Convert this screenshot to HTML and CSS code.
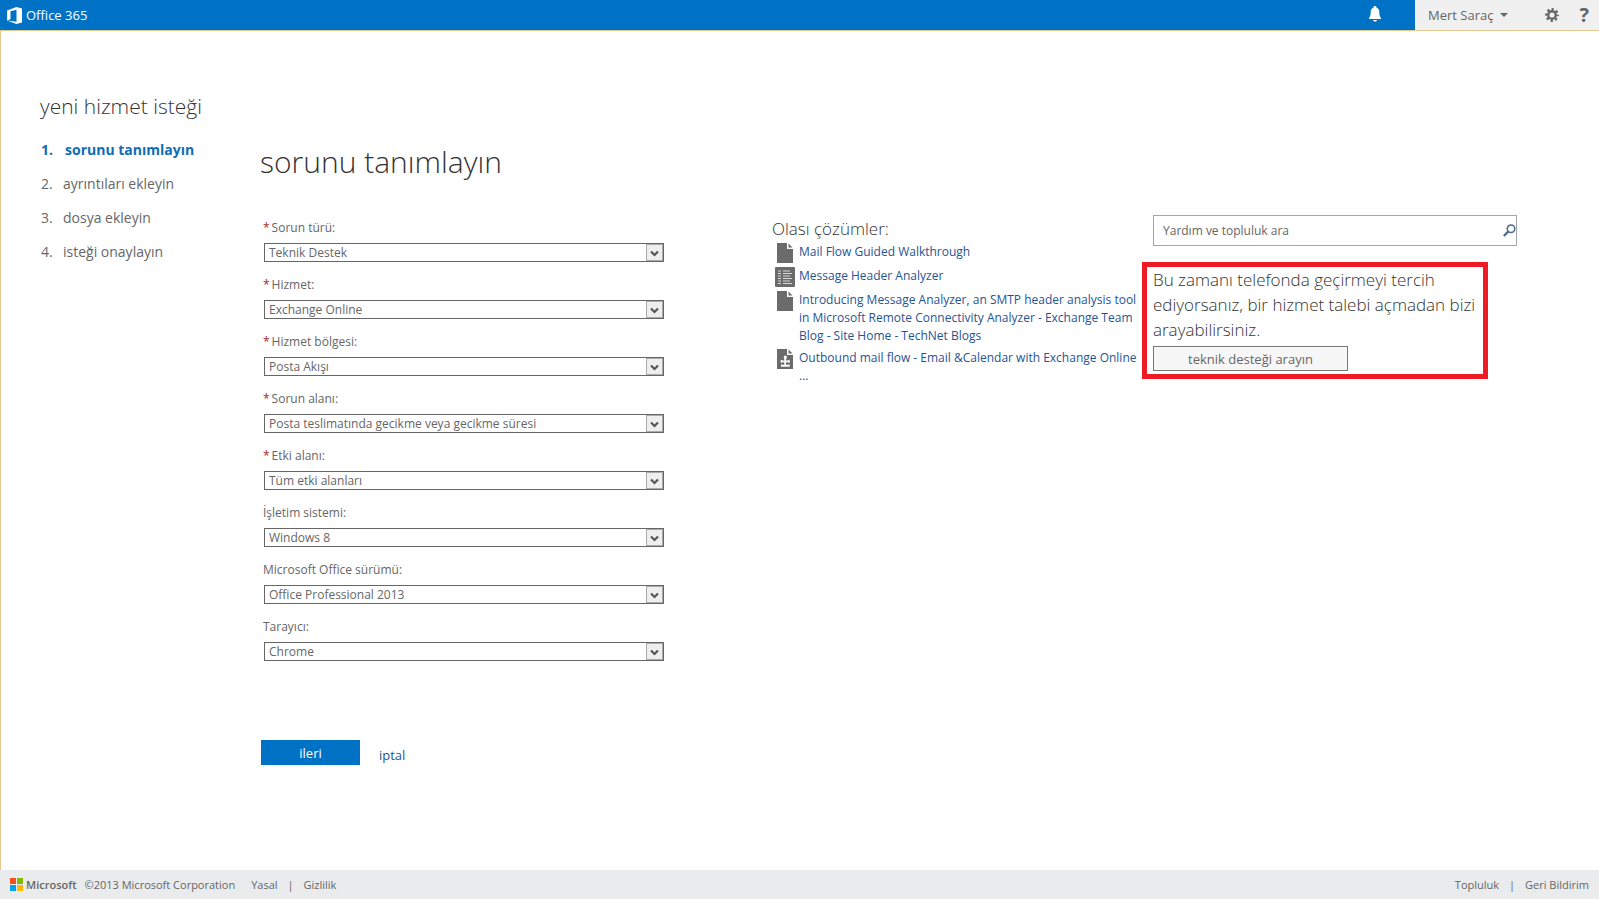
FILE: index.html
```html
<!DOCTYPE html>
<html lang="tr">
<head>
<meta charset="utf-8">
<title>Office 365 - yeni hizmet isteği</title>
<link rel="stylesheet" href="styles.css">
</head>
<body>
<svg class="defs" aria-hidden="true">
  <symbol id="doc" viewBox="0 0 16 20"><path d="M0 0h10v6h6v14H0z" fill="#6b6b6b"/><path d="M11.500 .5l4 4h-4z" fill="#6b6b6b"/></symbol>
  <symbol id="arrow" viewBox="0 0 17 17"><rect x=".5" y=".5" width="16" height="16" fill="#eee" stroke="#aaa"/><path d="M5 7.500l3.500 3.500L12 7.500" fill="none" stroke="#555" stroke-width="2.200"/></symbol>
</svg>
<header class="topbar">
  <a class="brand" href="#">
    <svg width="15" height="17" viewBox="0 0 15 17"><path fill="#fff" fill-rule="evenodd" d="M0 3.500L9.500 0 15 1.500v14L9.500 17 0 13.500l9.500 1.200V2.800L3.500 4.300v7.900L0 13.500z"/></svg>
    <span>Office 365</span>
  </a>
  <button class="bell" type="button" aria-label="Bildirimler">
    <svg width="12" height="16" viewBox="0 0 12 16"><path fill="#fff" d="M6 0c.9 0 1.400.6 1.400 1.400C9.500 2 10.300 3.800 10.300 6c0 3 .4 4.500 1.700 6v1H0v-1c1.300-1.500 1.700-3 1.700-6 0-2.200.8-4 2.900-4.600C4.600.6 5.100 0 6 0zM4 14h4c-.3 1-1 1.600-2 1.600S4.300 15 4 14z"/></svg>
  </button>
  <div class="account">
    <button class="user" type="button">Mert Saraç
      <svg width="8" height="4" viewBox="0 0 8 4"><path d="M0 0h8L4 4z" fill="#666"/></svg>
    </button>
    <button type="button" aria-label="Ayarlar">
      <svg width="14" height="14" viewBox="0 0 14 14"><g fill="none" stroke="#666"><circle cx="7" cy="7" r="3.800" stroke-width="2.400"/><circle cx="7" cy="7" r="5.800" stroke-width="2.200" stroke-dasharray="2.300 2.255" stroke-dashoffset="1.150"/></g></svg>
    </button>
    <button class="help" type="button" aria-label="Yardım">?</button>
  </div>
</header>

<main class="page">
  <nav class="steps">
    <h2>yeni hizmet isteği</h2>
    <ol>
      <li class="current"><span>1.</span>sorunu tanımlayın</li>
      <li><span>2.</span>ayrıntıları ekleyin</li>
      <li><span>3.</span>dosya ekleyin</li>
      <li><span>4.</span>isteği onaylayın</li>
    </ol>
  </nav>

  <div class="content">
    <h1>sorunu tanımlayın</h1>
    <div class="columns">
      <form class="form">
        <div class="field"><label for="f1"><b>*</b>Sorun türü:</label><div class="select"><select id="f1"><option>Teknik Destek</option></select><svg><use href="#arrow"/></svg></div></div>
        <div class="field"><label for="f2"><b>*</b>Hizmet:</label><div class="select"><select id="f2"><option>Exchange Online</option></select><svg><use href="#arrow"/></svg></div></div>
        <div class="field"><label for="f3"><b>*</b>Hizmet bölgesi:</label><div class="select"><select id="f3"><option>Posta Akışı</option></select><svg><use href="#arrow"/></svg></div></div>
        <div class="field"><label for="f4"><b>*</b>Sorun alanı:</label><div class="select"><select id="f4"><option>Posta teslimatında gecikme veya gecikme süresi</option></select><svg><use href="#arrow"/></svg></div></div>
        <div class="field"><label for="f5"><b>*</b>Etki alanı:</label><div class="select"><select id="f5"><option>Tüm etki alanları</option></select><svg><use href="#arrow"/></svg></div></div>
        <div class="field"><label for="f6">İşletim sistemi:</label><div class="select"><select id="f6"><option>Windows 8</option></select><svg><use href="#arrow"/></svg></div></div>
        <div class="field"><label for="f7">Microsoft Office sürümü:</label><div class="select"><select id="f7"><option>Office Professional 2013</option></select><svg><use href="#arrow"/></svg></div></div>
        <div class="field"><label for="f8">Tarayıcı:</label><div class="select"><select id="f8"><option>Chrome</option></select><svg><use href="#arrow"/></svg></div></div>
        <div class="actions">
          <button class="next" type="button">ileri</button>
          <a href="#">iptal</a>
        </div>
      </form>

      <section class="solutions">
        <h3>Olası çözümler:</h3>
        <ul>
          <li><svg class="ico" viewBox="0 0 20 20"><use href="#doc" x="2" width="16" height="20"/></svg><a href="#">Mail Flow Guided Walkthrough</a></li>
          <li><svg class="ico" viewBox="0 0 20 20"><rect width="20" height="20" rx="1" fill="#6b6b6b"/><path d="M3 4h3M3 6.500h3M3 9h3M3 11.500h3M3 14h3M3 16.500h3M8 4h7M8 6.500h9M8 9h7M8 11.500h9M8 14h7M8 16.500h9" stroke="#d8d8d8"/></svg><a href="#">Message Header Analyzer</a></li>
          <li><svg class="ico" viewBox="0 0 20 20"><use href="#doc" x="2" width="16" height="20"/></svg><a href="#">Introducing Message Analyzer, an SMTP header analysis tool in Microsoft Remote Connectivity Analyzer - Exchange Team Blog - Site Home - TechNet Blogs</a></li>
          <li><svg class="ico" viewBox="0 0 20 20"><use href="#doc" x="2" width="16" height="20"/><path d="M9 9a1.600 1.600 0 1 1 2.600 0l-.5 1.200v1.300h1.600l2-.8v3.300l-2-.8h-1.600v2.600h2l1.600-.5v2.500H6v-2.500l1.600.5h1.700v-2.600H7.700l-2 .8v-3.300l2 .8h1.600v-1.300z" fill="#fff"/></svg><a href="#">Outbound mail flow - Email &amp;Calendar with Exchange Online ...</a></li>
        </ul>
      </section>

      <aside class="help-panel">
        <form class="search">
          <input type="search" aria-label="Yardım ve topluluk ara" placeholder="Yardım ve topluluk ara">
          <button type="button" aria-label="Ara"><svg width="13" height="13" viewBox="0 0 13 13"><g fill="none" stroke="#4b6a88"><circle cx="8" cy="4.800" r="3.800" stroke-width="1.500"/><path d="M5.200 7.600L.8 12" stroke-width="2.200"/></g></svg></button>
        </form>
        <div class="callout">
          <p>Bu zamanı telefonda geçirmeyi tercih ediyorsanız, bir hizmet talebi açmadan bizi arayabilirsiniz.</p>
          <button type="button">teknik desteği arayın</button>
        </div>
      </aside>
    </div>
  </div>
</main>

<footer class="footer">
  <span class="ms">
    <svg width="13" height="13" viewBox="0 0 13 13"><path fill="#f25022" d="M0 0h6v6H0z"/><path fill="#7fba00" d="M7 0h6v6H7z"/><path fill="#00a4ef" d="M0 7h6v6H0z"/><path fill="#ffb900" d="M7 7h6v6H7z"/></svg>
    Microsoft
  </span>
  <span class="copy">©2013 Microsoft Corporation</span>
  <a href="#">Yasal</a><i>|</i><a href="#">Gizlilik</a>
  <span class="spacer"></span>
  <a href="#">Topluluk</a><i>|</i><a href="#">Geri Bildirim</a>
</footer>
</body>
</html>
```

FILE: styles.css
```css
* { box-sizing: border-box; }

body {
  margin: 0;
  min-height: 100vh;
  display: flex;
  flex-direction: column;
  background: #fff;
  color: #666;
  font: 12px/18px "Open Sans", "Noto Sans", sans-serif;
}

button, input, select { font: inherit; color: inherit; }
button { padding: 0; border: 0; background: none; }
a { color: #1f5494; text-decoration: none; }
h1, h2, h3, p, ul, ol { margin: 0; padding: 0; }
h1, h2, h3, p { font-weight: 300; color: #333; }
ul, ol { list-style: none; }
.defs { position: absolute; width: 0; height: 0; }

.topbar {
  display: flex;
  height: 31px;
  background: #0072c6;
  border-bottom: 1px solid #e3c88f;
}
.brand {
  display: flex;
  align-items: center;
  gap: 4px;
  padding-left: 7px;
  margin-right: auto;
  color: #fff;
  font-size: 13px;
}
.bell { width: 80px; padding-bottom: 2px; }
.bell svg { display: block; margin: 0 auto; }
.account {
  display: flex;
  align-items: center;
  padding: 0 10px 0 13px;
  background: #f0f0f0;
}
.account button { display: flex; align-items: center; }
.account .user { gap: 7px; margin-right: 37px; font-size: 13px; }
.account .help { margin-left: 20px; font-size: 20px; font-weight: 700; }

.page {
  flex: 1;
  display: flex;
  border-left: 1px solid #e3c88f;
  padding: 59px 82px 32px 39px;
}
.steps { flex: 0 0 220px; }
.steps h2 { font-size: 21px; line-height: 32px; }
.steps ol { padding-top: 11px; }
.steps li { display: flex; padding-left: 1px; font-size: 14px; line-height: 34px; }
.steps li span { width: 22px; }
.steps .current { color: #0f6cb6; font-weight: 700; }
.steps .current span { width: 24px; }

.content { flex: 1; min-width: 0; padding-top: 48px; }
h1 { font-size: 30px; line-height: 48px; }
.columns {
  display: grid;
  grid-template-columns: 404px minmax(0, 1fr) 375px;
  padding-top: 29px;
}

.form { padding: 4px 0 0 3px; }
.field { margin-bottom: 14px; }
.field label { display: block; height: 24px; }
.field b { margin-right: 2px; color: #a4262c; font-weight: 400; }
.select { display: grid; align-items: center; padding-left: 1px; }
.select select, .select svg { grid-area: 1 / 1; }
.select select {
  appearance: none;
  width: 100%;
  height: 19px;
  padding: 0 20px 0 4px;
  border: 1px solid #666;
  border-radius: 0;
  background: #fff;
  line-height: 17px;
}
.select svg {
  width: 17px;
  height: 17px;
  margin-right: 1px;
  justify-self: end;
  pointer-events: none;
}
.actions { display: flex; align-items: center; gap: 19px; margin: 79px 0 0 -2px; font-size: 13px; }
.next { width: 99px; height: 25px; background: #0072c6; color: #fff; }
.actions a { padding-top: 4px; }

.solutions { padding: 2px 0 0 108px; }
h3 { font-size: 17px; line-height: 24px; }
.solutions ul { padding: 2px 0 0 3px; }
.solutions li { display: flex; gap: 4px; margin-bottom: 4px; }
.ico { flex: none; width: 20px; height: 20px; }

.search {
  display: flex;
  align-items: center;
  height: 31px;
  margin-left: 11px;
  border: 1px solid #a0a8ac;
}
.search input {
  flex: 1;
  min-width: 0;
  padding: 0 9px;
  border: 0;
  background: none;
  outline: 0;
}
.search input::placeholder { color: #666; }
.search svg { display: block; }
.callout {
  margin: 16px 29px 0 0;
  padding: 0 0 3px 6px;
  border: 5px solid #ed1c24;
}
.callout p { font-size: 17px; line-height: 25px; }
.callout button {
  width: 195px;
  height: 25px;
  margin-top: 4px;
  border: 1px solid #777;
  background: #f7f7f7;
  font-size: 13px;
}

.footer {
  display: flex;
  align-items: center;
  height: 29px;
  padding: 0 10px;
  background: #eaebec;
  font-size: 11px;
}
.footer a { color: inherit; }
.footer i { width: 26px; text-align: center; font-style: normal; }
.ms { display: flex; align-items: center; gap: 3px; font-weight: 600; }
.copy { margin: 0 16px 0 8px; }
.spacer { flex: 1; }
```
